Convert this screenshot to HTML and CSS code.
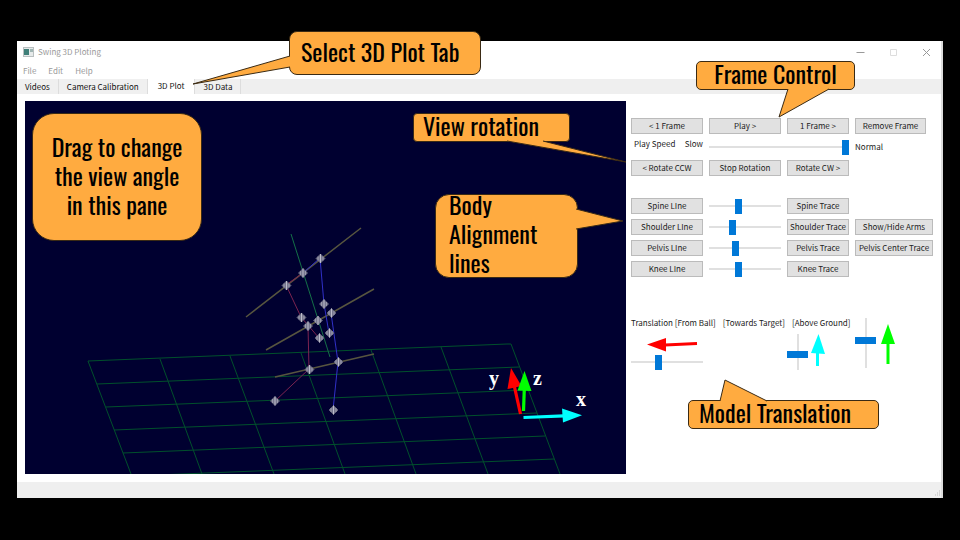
FILE: index.html
```
<!DOCTYPE html>
<html lang="en">
<head>
<meta charset="utf-8">
<title>Swing 3D Ploting</title>
<link rel="stylesheet" href="styles.css">
</head>
<body>
<main class="window">
  <header class="titlebar">
    <svg class="app-icon" viewBox="0 0 11 10" aria-hidden="true">
      <rect x="0.5" y="0.5" width="10" height="9" fill="#e6eaea" stroke="#b9bfc0"/>
      <rect x="1" y="2" width="5" height="6" fill="#3f7f78"/>
      <rect x="7" y="2" width="3" height="3" fill="#9fb5b3"/>
    </svg>
    <h1 class="title">Swing 3D Ploting</h1>
    <div class="caption">
      <button class="caption-button" aria-label="Minimize"><svg viewBox="0 0 9 9"><path d="M0.5 4.5h8"/></svg></button>
      <button class="caption-button faint" aria-label="Maximize"><svg viewBox="0 0 9 9"><path d="M1.5 1.5h6v6h-6z"/></svg></button>
      <button class="caption-button" aria-label="Close"><svg viewBox="0 0 9 9"><path d="M1 1l7 7M8 1l-7 7"/></svg></button>
    </div>
  </header>
  <nav class="menubar">
    <button class="menu">File</button>
    <button class="menu">Edit</button>
    <button class="menu">Help</button>
  </nav>
  <div class="tabs" role="tablist">
    <button class="tab" role="tab">Videos</button>
    <button class="tab" role="tab">Camera Calibration</button>
    <button class="tab selected" role="tab" aria-selected="true">3D Plot</button>
    <button class="tab" role="tab">3D Data</button>
  </div>
  <div class="workspace">
    <svg class="plot" viewBox="25 101 601 373" role="img" aria-label="3D plot">
      <defs>
        <g id="joint">
          <path d="M0 -4.500L4.500 0L0 4.500L-4.500 0Z" fill="#77778f" stroke="#66667c" stroke-width="0.800"/>
          <path d="M0 -4.500V4.500" stroke="#c4c4d0" stroke-width="0.900"/>
          <path d="M-2.500 -2V2M2.500 -2V2" stroke="#a4a4b4" stroke-width="0.800"/>
        </g>
      </defs>
      <g class="floor">
        <path d="M88 361L507 344L511 344M97 384L519 367M106 407L528 390M114 430L537 413M123 453L545 436M132 476L554 459"/>
        <path d="M88 361L131 474M160 359L202 474M230 356L274 474M301 353L345 474M371 350L416 474M441 347L488 474M511 344L560 474"/>
      </g>
      <g class="axes-lines">
        <path d="M246 317L361 228M266 350L374 289M275 377L374 354"/>
      </g>
      <path class="spine" d="M291 234L330 357"/>
      <path class="limb-right" d="M303 273L286 285L301 317L319 338M308 326L309 369L275 401"/>
      <path class="limb-left" d="M303 273L320 258L324 304L329 333M331 313L338 362L333 410"/>
      <use href="#joint" x="320.500" y="258.500"/><use href="#joint" x="303" y="273"/>
      <use href="#joint" x="286.500" y="285.500"/><use href="#joint" x="324" y="304"/>
      <use href="#joint" x="331.500" y="313"/><use href="#joint" x="301.500" y="317.500"/>
      <use href="#joint" x="318" y="320.500"/><use href="#joint" x="308" y="326"/>
      <use href="#joint" x="319.500" y="338"/><use href="#joint" x="329.500" y="333"/>
      <use href="#joint" x="309.500" y="369.500"/><use href="#joint" x="338.500" y="362"/>
      <use href="#joint" x="275" y="401"/><use href="#joint" x="333.500" y="410"/>
      <path d="M520.500 414L514.500 387" stroke="#f00" stroke-width="3.200"/>
      <path d="M511 368L521.500 386L507.500 389Z" fill="#f00"/>
      <path d="M523.500 411L524.300 389" stroke="#0f0" stroke-width="3.200"/>
      <path d="M524.500 371L531.500 391L517.500 390.500Z" fill="#0f0"/>
      <path d="M523.500 417.500L564 415.800" stroke="#0ff" stroke-width="3.200"/>
      <path d="M582 415.300L562 408.500L563 422.500Z" fill="#0ff"/>
      <g class="axis-name">
        <text x="489" y="385">y</text><text x="533" y="385">z</text><text x="576" y="406">x</text>
      </g>
    </svg>
    <section class="panel" aria-label="Controls">
      <div class="group">
        <button class="btn">&lt; 1 Frame</button>
        <button class="btn">Play &gt;</button>
        <button class="btn">1 Frame &gt;</button>
        <button class="btn btn-short">Remove Frame</button>
        <label class="speed-label" for="speed"><span>Play Speed</span><span>Slow</span></label>
        <input class="slider wide" id="speed" type="range" value="100">
        <span class="note">Normal</span>
        <button class="btn">&lt; Rotate CCW</button>
        <button class="btn">Stop Rotation</button>
        <button class="btn">Rotate CW &gt;</button>
      </div>
      <div class="group lines">
        <button class="btn first">Spine LIne</button>
        <input class="slider" type="range" value="40" aria-label="Spine line length">
        <button class="btn">Spine Trace</button>
        <button class="btn first">Shoulder LIne</button>
        <input class="slider" type="range" value="30" aria-label="Shoulder line length">
        <button class="btn">Shoulder Trace</button>
        <button class="btn">Show/Hide Arms</button>
        <button class="btn first">Pelvis LIne</button>
        <input class="slider" type="range" value="36" aria-label="Pelvis line length">
        <button class="btn">Pelvis Trace</button>
        <button class="btn">Pelvis Center Trace</button>
        <button class="btn first">Knee LIne</button>
        <input class="slider" type="range" value="40" aria-label="Knee line length">
        <button class="btn">Knee Trace</button>
      </div>
      <div class="group translation">
        <div class="translation-labels">
          <label for="from-ball">Translation [From Ball]</label>
          <label for="towards">[Towards Target]</label>
          <label for="above">[Above Ground]</label>
        </div>
        <div class="from-ball">
          <svg class="arrow-left" viewBox="0 0 52 15" aria-hidden="true"><path d="M19 8L51 6.500" stroke="#f00" stroke-width="3"/><path d="M1 7.500L20 1V14.500Z" fill="#f00"/></svg>
          <input class="slider" id="from-ball" type="range" value="37">
        </div>
        <div class="vertical-pair towards">
          <input class="slider vertical" id="towards" type="range" value="43">
          <svg class="arrow-up" viewBox="0 0 14 33" aria-hidden="true"><path d="M6.500 32V17" stroke="#0ff" stroke-width="3"/><path d="M7.500 0L14 20L0 19Z" fill="#0ff"/></svg>
        </div>
        <div class="vertical-pair above">
          <input class="slider vertical tall" id="above" type="range" value="56">
          <svg class="arrow-up tall" viewBox="0 0 14 40" aria-hidden="true"><path d="M7 40V18" stroke="#0f0" stroke-width="3"/><path d="M7 0L14 20H0Z" fill="#0f0"/></svg>
        </div>
      </div>
    </section>
  </div>
  <footer class="statusbar"><svg class="grip" viewBox="0 0 8 8" aria-hidden="true"><path d="M6 1h1M4 3h1M6 3h1M2 5h1M4 5h1M6 5h1" stroke="#bbb"/></svg></footer>

  <aside class="callout select-tab">Select 3D Plot Tab
    <svg class="tail" viewBox="0 0 99 30" aria-hidden="true"><path d="M98 1L1 29L98 12"/></svg>
  </aside>
  <aside class="callout drag">Drag to change the view angle in this pane</aside>
  <aside class="callout frame-control">Frame Control
    <svg class="tail" viewBox="0 0 52 30" aria-hidden="true"><path d="M10 1L1 29L51 1"/></svg>
  </aside>
  <aside class="callout rotation">View rotation
    <svg class="tail" viewBox="0 0 121 23" aria-hidden="true"><path d="M1 1L120 22L37 1"/></svg>
  </aside>
  <aside class="callout body-lines">Body Alignment lines
    <svg class="tail" viewBox="0 0 49 22" aria-hidden="true"><path d="M1 1L48 13L1 21"/></svg>
  </aside>
  <aside class="callout model">Model Translation
    <svg class="tail" viewBox="0 0 49 23" aria-hidden="true"><path d="M1 22L6 1L48 22"/></svg>
  </aside>
</main>
</body>
</html>
```
FILE: styles.css
```
* { box-sizing: border-box; }
body {
  margin: 0;
  padding: 41px 17px 42px;
  background: #000;
  color: #222;
  font: 8px/12px "Noto Sans CJK JP", sans-serif;
}
button, input { font: inherit; color: inherit; margin: 0; padding: 0; border: 0; background: none; }
h1 { margin: 0; font: inherit; }
.window { position: relative; background: #fff; border-right: 2px solid #ddd; }

.titlebar { display: flex; align-items: center; gap: 4px; height: 22px; padding: 0 10px 0 6px; color: #999; }
.app-icon { width: 11px; height: 10px; }
.title { flex: 1; }
.caption { display: flex; gap: 24px; }
.caption-button { width: 9px; height: 9px; line-height: 0; }
.caption-button svg { width: 9px; height: 9px; fill: none; stroke: #999; }
.caption-button.faint svg { stroke: #ddd; }
.menubar { display: flex; gap: 12px; height: 16px; padding: 0 6px; color: #999; }
.tabs { display: flex; height: 15px; background: #efefef; }
.tab { padding: 0 8px; border-right: 1px solid #ddd; color: #111; background: #f0f0f0; }
.tab.selected { padding: 0 10px 2px; background: #fff; }

.workspace { display: grid; grid-template-columns: minmax(0, 1fr) 310px; gap: 5px; padding: 7px 0 8px 8px; align-items: start; }
.plot { display: block; width: 100%; height: auto; background: #000030; fill: none; }
.floor { stroke: #00502c; }
.axes-lines { stroke: #57553f; stroke-width: 1.5; }
.spine { stroke: #147048; }
.limb-right { stroke: #7c2450; }
.limb-left { stroke: #3030c8; }
.axis-name { fill: #fff; font: bold 20px "Liberation Serif", serif; }

.panel { display: flex; flex-direction: column; padding-top: 17px; }
.group { display: grid; grid-template-columns: 72px 72px 62px 78px; grid-auto-rows: 16px; gap: 5px 6px; }
.lines { margin-top: 22px; }
.first { grid-column: 1; }
.btn { height: 16px; border: 1px solid #bbb; background: #e1e1e1; line-height: 12px; white-space: nowrap; }
.btn-short { width: 71px; }
.speed-label { display: flex; justify-content: space-between; padding: 0 0 0 3px; line-height: 10px; white-space: nowrap; }
.wide { grid-column: span 2; }
.note { line-height: 16px; }

.slider { -webkit-appearance: none; appearance: none; width: 100%; height: 16px; background: linear-gradient(#e0e0e0, #e0e0e0) center / 100% 2px no-repeat; }
.slider::-webkit-slider-thumb { -webkit-appearance: none; width: 7px; height: 15px; background: #0078d7; }
.slider.vertical { writing-mode: vertical-lr; direction: rtl; width: 21px; height: 36px; background: linear-gradient(#e0e0e0, #e0e0e0) center / 2px 100% no-repeat; }
.slider.vertical::-webkit-slider-thumb { width: 21px; height: 7px; }
.slider.vertical.tall { height: 50px; }

.translation { margin-top: 41px; grid-template-rows: 10px 36px; grid-auto-rows: auto; row-gap: 6px; }
.translation-labels { grid-column: 1 / 4; display: flex; gap: 7px; line-height: 10px; white-space: nowrap; }
.from-ball { grid-row: 2; display: flex; flex-direction: column; justify-content: space-between; }
.arrow-left { width: 52px; height: 15px; margin-left: 15px; margin-top: 3px; }
.vertical-pair { display: flex; gap: 3px; }
.towards { grid-area: 2 / 3; }
.above { grid-area: 1 / 4 / 3 / 5; gap: 5px; align-items: flex-start; }
.arrow-up { width: 14px; height: 33px; }
.arrow-up.tall { height: 40px; margin-top: 6px; }
.statusbar { display: flex; justify-content: flex-end; align-items: flex-end; height: 16px; background: #efefef; }
.grip { width: 8px; height: 8px; }

.callout {
  position: absolute;
  border: 1px solid #3a2a14;
  background: #ffab40;
  color: #000;
  font: 24px/29px Oswald, "Liberation Sans Narrow", sans-serif;
}
.tail { position: absolute; fill: #ffab40; stroke: #3a2a14; }
.select-tab { left: 272px; top: -10px; width: 192px; height: 44px; padding: 5px 11px; border-radius: 8px; white-space: nowrap; }
.select-tab .tail { width: 99px; height: 30px; left: -98px; top: 23px; }
.drag { left: 15px; top: 72px; width: 170px; height: 128px; padding: 18px 16px; border-radius: 22px; text-align: center; }
.frame-control { left: 679px; top: 20px; width: 159px; height: 29px; border-radius: 5px; text-align: center; line-height: 23px; white-space: nowrap; }
.frame-control .tail { width: 52px; height: 30px; left: 81px; top: 26px; }
.rotation { left: 396px; top: 72px; width: 157px; height: 29px; padding: 0 9px; border-radius: 4px; line-height: 23px; white-space: nowrap; }
.rotation .tail { width: 121px; height: 23px; left: 92px; top: 26px; }
.body-lines { display: flex; align-items: flex-end; left: 418px; top: 153px; width: 143px; height: 84px; padding: 0 30px 0 13px; border-radius: 14px; }
.body-lines .tail { width: 49px; height: 22px; left: 139px; top: 13px; }
.model { left: 671px; top: 359px; width: 191px; height: 29px; padding: 0 10px; border-radius: 5px; line-height: 23px; white-space: nowrap; }
.model .tail { width: 49px; height: 23px; left: 30px; top: -22px; }
```
